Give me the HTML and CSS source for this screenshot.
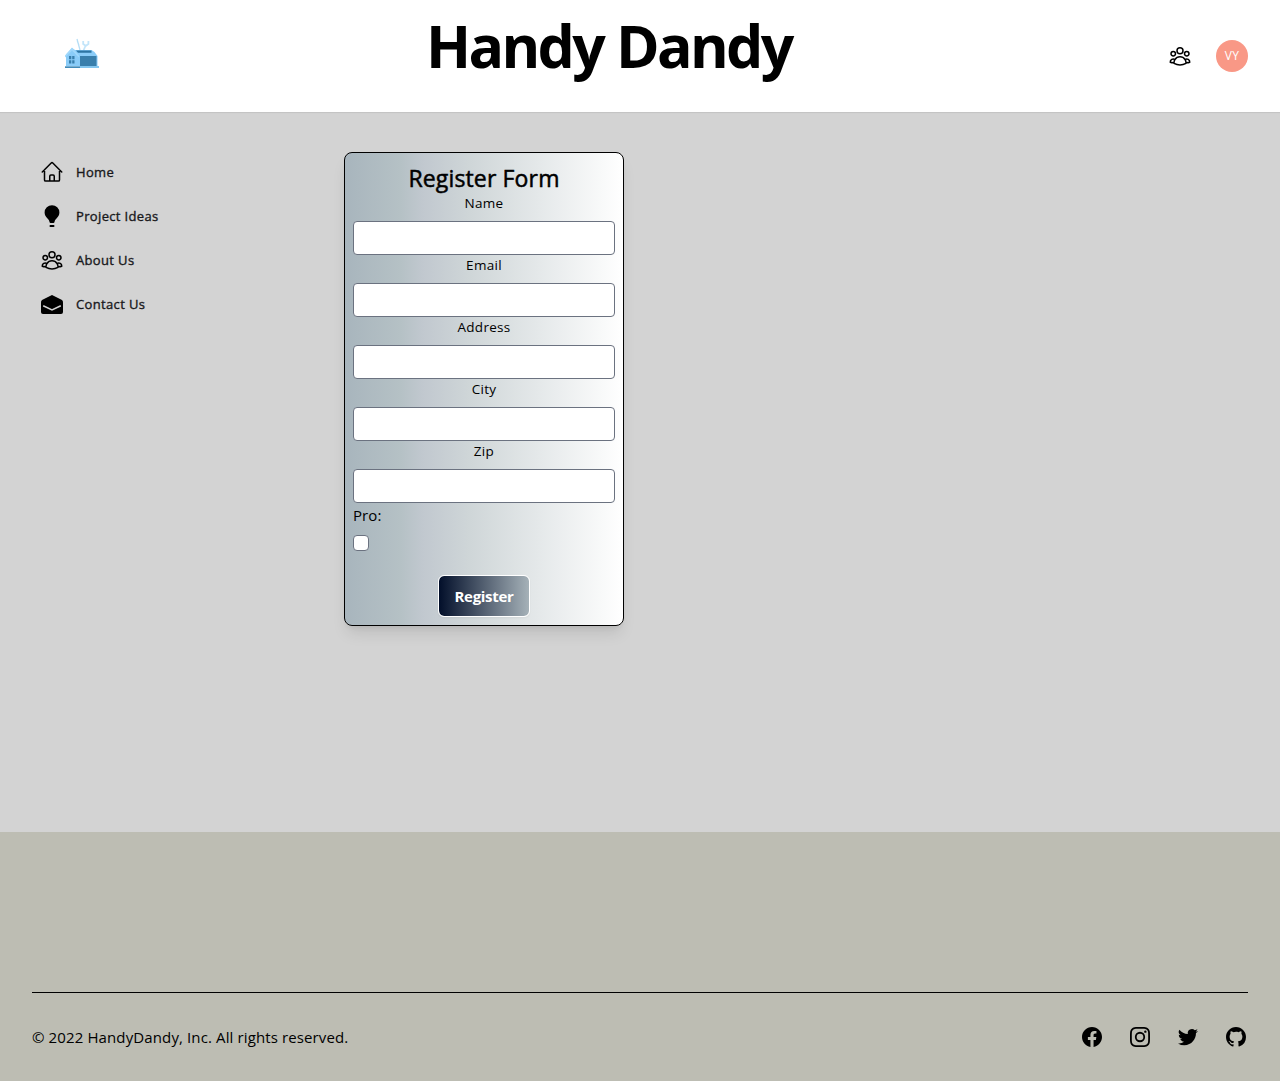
FILE: index.html
```html
<!DOCTYPE html>
<html lang="en">
<head>
<meta charset="utf-8">
<title>Handy Dandy</title>
<link rel="stylesheet" href="styles.css">
</head>
<body>
<svg class="defs" aria-hidden="true">
  <symbol id="users" viewBox="0 0 24 24"><path fill="none" stroke="currentColor" stroke-width="1.5" stroke-linecap="round" stroke-linejoin="round" d="M18 18.72a9.094 9.094 0 003.741-.479 3 3 0 00-4.682-2.72m.94 3.198l.001.031c0 .225-.012.447-.037.666A11.944 11.944 0 0112 21c-2.17 0-4.207-.576-5.963-1.584A6.062 6.062 0 016 18.719m12 0a5.971 5.971 0 00-.941-3.197m0 0A5.995 5.995 0 0012 12.75a5.995 5.995 0 00-5.058 2.772m0 0a3 3 0 00-4.681 2.72 8.986 8.986 0 003.74.477m.94-3.197a5.971 5.971 0 00-.94 3.197M15 6.75a3 3 0 11-6 0 3 3 0 016 0zm6 3a2.25 2.25 0 11-4.5 0 2.25 2.25 0 014.5 0zm-13.5 0a2.25 2.25 0 11-4.5 0 2.25 2.25 0 014.5 0z"/></symbol>
</svg>
<header class="header">
  <svg class="logo" viewBox="0 0 34 30" aria-label="Handy Dandy logo">
    <path d="M12 1l3 11M12.3 3l1.6 4" stroke="#b5def6" stroke-width="1.3" fill="none"/>
    <path d="M18.2 3v3l2.6 1.8L23.4 6V3M20.8 7l-2.500 6" stroke="#c3e5fa" stroke-width="1.8" fill="none"/>
    <path d="M1 28V16.500L7 10l3 2h16.500l3 2 3 4v10z" fill="#8accf8"/>
    <path d="M0 17.500l7-8 7 8v2L7 12.500l-7 7z" fill="#a1d8fb"/>
    <path d="M11 12.500h15.500v2.300H13z" fill="#2d75a3"/>
    <path d="M15 18h16.500v10H15z" fill="#397fac"/>
    <path d="M4 18h2.300v3.200H4zM7.200 18h2.300v3.200H7.200zM4 22.200h2.300v3.200H4zM7.200 22.200h2.300v3.200H7.200z" fill="#397fac"/>
    <path d="M0 28.300h15v1.700H0z" fill="#428bb9"/><path d="M15 28h19v2H15z" fill="#83c6ef"/>
  </svg>
  <h1 class="title">Handy Dandy</h1>
  <div class="account">
    <svg class="icon"><use href="#users"/></svg>
    <span class="avatar">VY</span>
  </div>
</header>
<main class="main">
  <nav class="nav">
    <a class="nav-item"><svg class="icon" viewBox="0 0 24 24"><path fill="none" stroke="currentColor" stroke-width="1.5" stroke-linecap="round" stroke-linejoin="round" d="M2.250 12l8.954-8.955c.44-.439 1.152-.439 1.591 0L21.750 12M4.500 9.750v10.125c0 .621.504 1.125 1.125 1.125H9.750v-4.875c0-.621.504-1.125 1.125-1.125h2.250c.621 0 1.125.504 1.125 1.125V21h4.125c.621 0 1.125-.504 1.125-1.125V9.750M8.250 21h8.250"/></svg><span>Home</span></a>
    <a class="nav-item"><svg class="icon" viewBox="0 0 24 24"><path fill="currentColor" d="M12 1.200a7.400 7.400 0 0 0-7.400 7.400c0 2.600 1.200 4.300 2.700 5.700 1.300 1.200 2 2.200 2.200 3.700.1.600.5.900 1.100.9h2.800c.6 0 1-.3 1.100-.9.200-1.500.9-2.500 2.200-3.700 1.500-1.400 2.700-3.100 2.700-5.700A7.400 7.400 0 0 0 12 1.200z"/><rect x="9.500" y="21" width="5" height="1.900" rx=".9" fill="currentColor"/></svg><span>Project Ideas</span></a>
    <a class="nav-item"><svg class="icon"><use href="#users"/></svg><span>About Us</span></a>
    <a class="nav-item"><svg class="icon" viewBox="0 0 24 24"><path fill="currentColor" d="M12 3L3 7.500C1.500 8.300 1 9 1 10.500V20a2 2 0 0 0 2 2h18a2 2 0 0 0 2-2v-9.500c0-1.500-.5-2.200-2-3z"/><path d="M3.200 13.700L12 17.900l8.800-4.200" fill="none" stroke="#d3d3d3" stroke-width="1.500"/></svg><span>Contact Us</span></a>
  </nav>
  <form class="card">
    <h2 class="card-title">Register Form</h2>
    <label class="field"><span>Name</span><input class="input" type="text"></label>
    <label class="field"><span>Email</span><input class="input" type="text"></label>
    <label class="field"><span>Address</span><input class="input" type="text"></label>
    <label class="field"><span>City</span><input class="input" type="text"></label>
    <label class="field"><span>Zip</span><input class="input" type="text"></label>
    <label class="pro"><span>Pro:</span><input class="checkbox" type="checkbox"></label>
    <button class="button" type="button">Register</button>
  </form>
</main>
<footer class="footer">
  <div class="footer-row">
    <p class="copyright">© 2022 HandyDandy, Inc. All rights reserved.</p>
    <div class="social">
      <svg class="icon" viewBox="0 0 24 24"><path fill="currentColor" fill-rule="evenodd" d="M22 12c0-5.523-4.477-10-10-10S2 6.477 2 12c0 4.991 3.657 9.128 8.438 9.878v-6.987h-2.540V12h2.540V9.797c0-2.506 1.492-3.890 3.777-3.890 1.094 0 2.238.195 2.238.195v2.460h-1.260c-1.243 0-1.630.771-1.630 1.562V12h2.773l-.443 2.890h-2.330v6.988C18.343 21.128 22 16.991 22 12z"/></svg>
      <svg class="icon" viewBox="0 0 24 24"><path fill="currentColor" fill-rule="evenodd" d="M12.315 2c2.430 0 2.784.013 3.808.060 1.064.049 1.791.218 2.427.465a4.902 4.902 0 011.772 1.153 4.902 4.902 0 011.153 1.772c.247.636.416 1.363.465 2.427.048 1.067.060 1.407.060 4.123v.080c0 2.643-.012 2.987-.060 4.043-.049 1.064-.218 1.791-.465 2.427a4.902 4.902 0 01-1.153 1.772 4.902 4.902 0 01-1.772 1.153c-.636.247-1.363.416-2.427.465-1.067.048-1.407.060-4.123.060h-.080c-2.643 0-2.987-.012-4.043-.060-1.064-.049-1.791-.218-2.427-.465a4.902 4.902 0 01-1.772-1.153 4.902 4.902 0 01-1.153-1.772c-.247-.636-.416-1.363-.465-2.427-.047-1.024-.060-1.379-.060-3.808v-.630c0-2.430.013-2.784.060-3.808.049-1.064.218-1.791.465-2.427a4.902 4.902 0 011.153-1.772A4.902 4.902 0 015.450 2.525c.636-.247 1.363-.416 2.427-.465C8.901 2.013 9.256 2 11.685 2h.630zm-.081 1.802h-.468c-2.456 0-2.784.011-3.807.058-.975.045-1.504.207-1.857.344-.467.182-.800.398-1.150.748-.350.350-.566.683-.748 1.150-.137.353-.300.882-.344 1.857-.047 1.023-.058 1.351-.058 3.807v.468c0 2.456.011 2.784.058 3.807.045.975.207 1.504.344 1.857.182.466.399.800.748 1.150.350.350.683.566 1.150.748.353.137.882.300 1.857.344 1.054.048 1.370.058 4.041.058h.080c2.597 0 2.917-.010 3.960-.058.976-.045 1.505-.207 1.858-.344.466-.182.800-.398 1.150-.748.350-.350.566-.683.748-1.150.137-.353.300-.882.344-1.857.048-1.055.058-1.370.058-4.041v-.080c0-2.597-.010-2.917-.058-3.960-.045-.976-.207-1.505-.344-1.858a3.097 3.097 0 00-.748-1.150 3.098 3.098 0 00-1.150-.748c-.353-.137-.882-.300-1.857-.344-1.023-.047-1.351-.058-3.807-.058zM12 6.865a5.135 5.135 0 110 10.270 5.135 5.135 0 010-10.270zm0 1.802a3.333 3.333 0 100 6.666 3.333 3.333 0 000-6.666zm5.338-3.205a1.200 1.200 0 110 2.400 1.200 1.200 0 010-2.400z"/></svg>
      <svg class="icon" viewBox="0 0 24 24"><path fill="currentColor" d="M8.290 20.251c7.547 0 11.675-6.253 11.675-11.675 0-.178 0-.355-.012-.530A8.348 8.348 0 0022 5.920a8.190 8.190 0 01-2.357.646 4.118 4.118 0 001.804-2.270 8.224 8.224 0 01-2.605.996 4.107 4.107 0 00-6.993 3.743 11.650 11.650 0 01-8.457-4.287 4.106 4.106 0 001.270 5.477A4.072 4.072 0 012.800 9.713v.052a4.105 4.105 0 003.292 4.022 4.095 4.095 0 01-1.853.070 4.108 4.108 0 003.834 2.850A8.233 8.233 0 012 18.407a11.616 11.616 0 006.290 1.840"/></svg>
      <svg class="icon" viewBox="0 0 24 24"><path fill="currentColor" fill-rule="evenodd" d="M12 2C6.477 2 2 6.484 2 12.017c0 4.425 2.865 8.180 6.839 9.504.500.092.682-.217.682-.483 0-.237-.008-.868-.013-1.703-2.782.605-3.369-1.343-3.369-1.343-.454-1.158-1.110-1.466-1.110-1.466-.908-.620.069-.608.069-.608 1.003.070 1.531 1.032 1.531 1.032.892 1.530 2.341 1.088 2.910.832.092-.647.350-1.088.636-1.338-2.220-.253-4.555-1.113-4.555-4.951 0-1.093.390-1.988 1.029-2.688-.103-.253-.446-1.272.098-2.650 0 0 .840-.270 2.750 1.026A9.564 9.564 0 0112 6.844c.850.004 1.705.115 2.504.337 1.909-1.296 2.747-1.027 2.747-1.027.546 1.379.202 2.398.100 2.651.640.700 1.028 1.595 1.028 2.688 0 3.848-2.339 4.695-4.566 4.943.359.309.678.920.678 1.855 0 1.338-.012 2.419-.012 2.747 0 .268.180.580.688.482A10.019 10.019 0 0022 12.017C22 6.484 17.522 2 12 2z"/></svg>
    </div>
  </div>
</footer>
</body>
</html>
```
FILE: styles.css
```css
* { box-sizing: border-box; }
body { margin: 0; font-family: "Open Sans", "Noto Sans", sans-serif; font-size: 16px; line-height: 24px; color: #000; background: #bdbdb3; }
h1, h2, p { margin: 0; }
.defs { display: none; }
.icon { display: block; width: 24px; height: 24px; flex: none; }

.header { height: 112px; padding: 0 32px 0 65px; display: flex; background: #fff; }
.logo { width: 34px; height: 30px; margin-top: 38px; }
.title { margin: 15px 0 0 327px; width: 376px; font-size: 59px; line-height: 60px; font-weight: 700; letter-spacing: -2.65px; white-space: nowrap; }
.account { margin-left: auto; display: flex; align-items: center; gap: 24px; }
.avatar { width: 32px; height: 32px; border-radius: 50%; background: #f99886; color: #fff; font-size: 12px; line-height: 32px; text-align: center; letter-spacing: .2px; }

.main { height: 720px; padding: 40px 32px; display: flex; align-items: flex-start; gap: 56px; background: #d3d3d3; box-shadow: inset 0 2px 1px -1px rgba(0,0,0,.08); }
.nav { width: 256px; display: flex; flex-direction: column; gap: 4px; }
.nav-item { height: 40px; padding: 0 8px; display: flex; align-items: center; gap: 12px; font-size: 13px; letter-spacing: .35px; }
.nav-item span { color: #18181b; -webkit-text-stroke: .35px #18181b; }

.card { width: 280px; padding: 8px; border: 1px solid #000; border-radius: 8px; display: flex; flex-direction: column; background: linear-gradient(90deg, #a8b5bd, #b5c1c5 20%, #c1c8cf 28%, #cfd6d8 45%, #fff); box-shadow: 0 10px 15px -3px rgba(0,0,0,.1), 0 4px 6px -4px rgba(0,0,0,.1); }
.card-title { height: 32px; font-size: 23px; line-height: 34px; font-weight: 400; -webkit-text-stroke: .5px #000; letter-spacing: .15px; text-align: center; }
.field { display: flex; flex-direction: column; gap: 8px; padding-top: 0; font-size: 13.5px; line-height: 20px; text-align: center; letter-spacing: .3px; }
.input { display: block; width: 100%; height: 34px; margin: 0; background: #fff; border: 1px solid #6b7280; border-radius: 4px; }
.pro { display: flex; flex-direction: column; gap: 8px; font-size: 15px; line-height: 24px; letter-spacing: .1px; }
.checkbox { appearance: none; width: 16px; height: 16px; margin: 0; border: 1px solid #6b7280; border-radius: 4px; background: #fff; }
.button { align-self: center; width: 92px; height: 42px; margin-top: 24px; padding: 0; border: 1px solid #fff; border-radius: 6px; background: linear-gradient(90deg, #020f2a, #a5b1b8) padding-box; color: #fff; font: 700 15px/24px "Open Sans", sans-serif; letter-spacing: -.3px; box-shadow: 0 1px 2px rgba(0,0,0,.05); }

.footer { height: 249px; padding: 160px 32px 0; }
.footer-row { display: flex; justify-content: space-between; align-items: center; border-top: 1px solid #000; padding-top: 32px; }
.copyright { font-size: 15px; letter-spacing: .12px; }
.social { display: flex; gap: 24px; }
```
